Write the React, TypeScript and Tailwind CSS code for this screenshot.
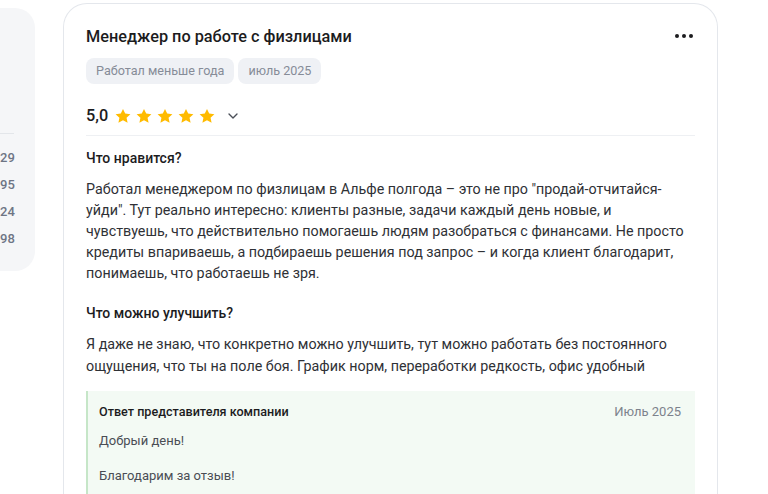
import { ChevronDown } from "lucide-react";

const leftNumbers = ["29", "95", "24", "98"];

function Stars() {
  return (
    <div className="flex items-center gap-[3px]">
      {[0, 1, 2, 3, 4].map((i) => (
        <svg key={i} viewBox="0 0 24 24" className="h-[18px] w-[18px]" fill="#ffbb00">
          <path d="M12 2.5l2.95 6.32 6.9.78-5.12 4.7 1.4 6.82L12 17.7l-6.13 3.42 1.4-6.82-5.12-4.7 6.9-.78z" />
        </svg>
      ))}
    </div>
  );
}

function App() {
  return (
    <div
      className="flex h-[494px] w-[768px] items-start gap-[28px] overflow-hidden bg-white"
      style={{ fontFamily: "Roboto, 'Noto Sans', sans-serif" }}
    >
      {/* левая панель (обрезана) */}
      <div className="mt-[8px] h-[263px] w-[35px] shrink-0 rounded-r-[20px] bg-[#f5f6f8] pr-[21px]">
        <div className="mt-[125px] h-px w-full bg-[#e3e6ea]" />
        <div className="mt-[15px] flex flex-col gap-[9px] text-right text-[13px] font-medium leading-[18px] text-[#6e7585]">
          {leftNumbers.map((n) => (
            <div key={n}>{n}</div>
          ))}
        </div>
      </div>

      {/* карточка отзыва */}
      <div className="mt-[3px] w-[655px] shrink-0 rounded-t-[24px] border border-b-0 border-[#e4e7ec] px-[22px] pt-[20px]">
        <div className="flex items-start justify-between">
          <h2 className="text-[16.3px] font-medium leading-[26px] text-[#1c1c1e]">
            Менеджер по работе с физлицами
          </h2>
          <div className="mr-[2px] mt-[10px] flex gap-[3px]">
            <span className="h-[4px] w-[4px] rounded-full bg-[#1c1c1e]" />
            <span className="h-[4px] w-[4px] rounded-full bg-[#1c1c1e]" />
            <span className="h-[4px] w-[4px] rounded-full bg-[#1c1c1e]" />
          </div>
        </div>

        <div className="mt-[8px] flex gap-[4px]">
          <span className="rounded-[8px] bg-[#eff1f5] px-[10px] py-[4px] text-[12.6px] leading-[18px] text-[#868c98]">
            Работал меньше года
          </span>
          <span className="rounded-[8px] bg-[#eff1f5] px-[10px] py-[4px] text-[12.6px] leading-[18px] text-[#868c98]">
            июль 2025
          </span>
        </div>

        <div className="mt-[20px] flex items-center">
          <span className="text-[16.3px] font-medium leading-[24px] text-[#1c1c1e]">5,0</span>
          <div className="ml-[6px]">
            <Stars />
          </div>
          <ChevronDown className="ml-[9px] h-[16px] w-[16px] text-[#4b4f58]" strokeWidth={2} />
        </div>

        <div className="mt-[7px] h-px w-full bg-[#eef0f3]" />

        <h3 className="mt-[12px] text-[14px] font-medium leading-[20px] text-[#1c1c1e]">Что нравится?</h3>
        <p className="mt-[11px] text-[14.3px] leading-[21px] text-[#2f3136]">
          Работал менеджером по физлицам в Альфе полгода – это не про "продай-отчитайся-уйди". Тут реально
          интересно: клиенты разные, задачи каждый день новые, и чувствуешь, что действительно помогаешь людям
          разобраться с финансами. Не просто кредиты впариваешь, а подбираешь решения под запрос – и когда клиент
          благодарит, понимаешь, что работаешь не зря.
        </p>

        <h3 className="mt-[19px] text-[14px] font-medium leading-[20px] text-[#1c1c1e]">Что можно улучшить?</h3>
        <p className="mt-[10px] text-[14.3px] leading-[22px] text-[#2f3136]">
          Я даже не знаю, что конкретно можно улучшить, тут можно работать без постоянного ощущения, что ты на поле
          боя. График норм, переработки редкость, офис удобный
        </p>

        <div className="mt-[14px] border-l-2 border-[#c6e6c8] bg-[#f3faf4] pb-[20px] pl-[11px] pr-[14px] pt-[11px]">
          <div className="flex items-start justify-between">
            <span className="text-[12.6px] font-medium leading-[20px] text-[#1c1c1e]">
              Ответ представителя компании
            </span>
            <span className="text-[13px] leading-[20px] text-[#7d828c]">Июль 2025</span>
          </div>
          <p className="mt-[9px] text-[13px] leading-[20px] text-[#4a4d54]">Добрый день!</p>
          <p className="mt-[15px] text-[13px] leading-[20px] text-[#4a4d54]">Благодарим за отзыв!</p>
        </div>
      </div>
    </div>
  );
}

export default App;
